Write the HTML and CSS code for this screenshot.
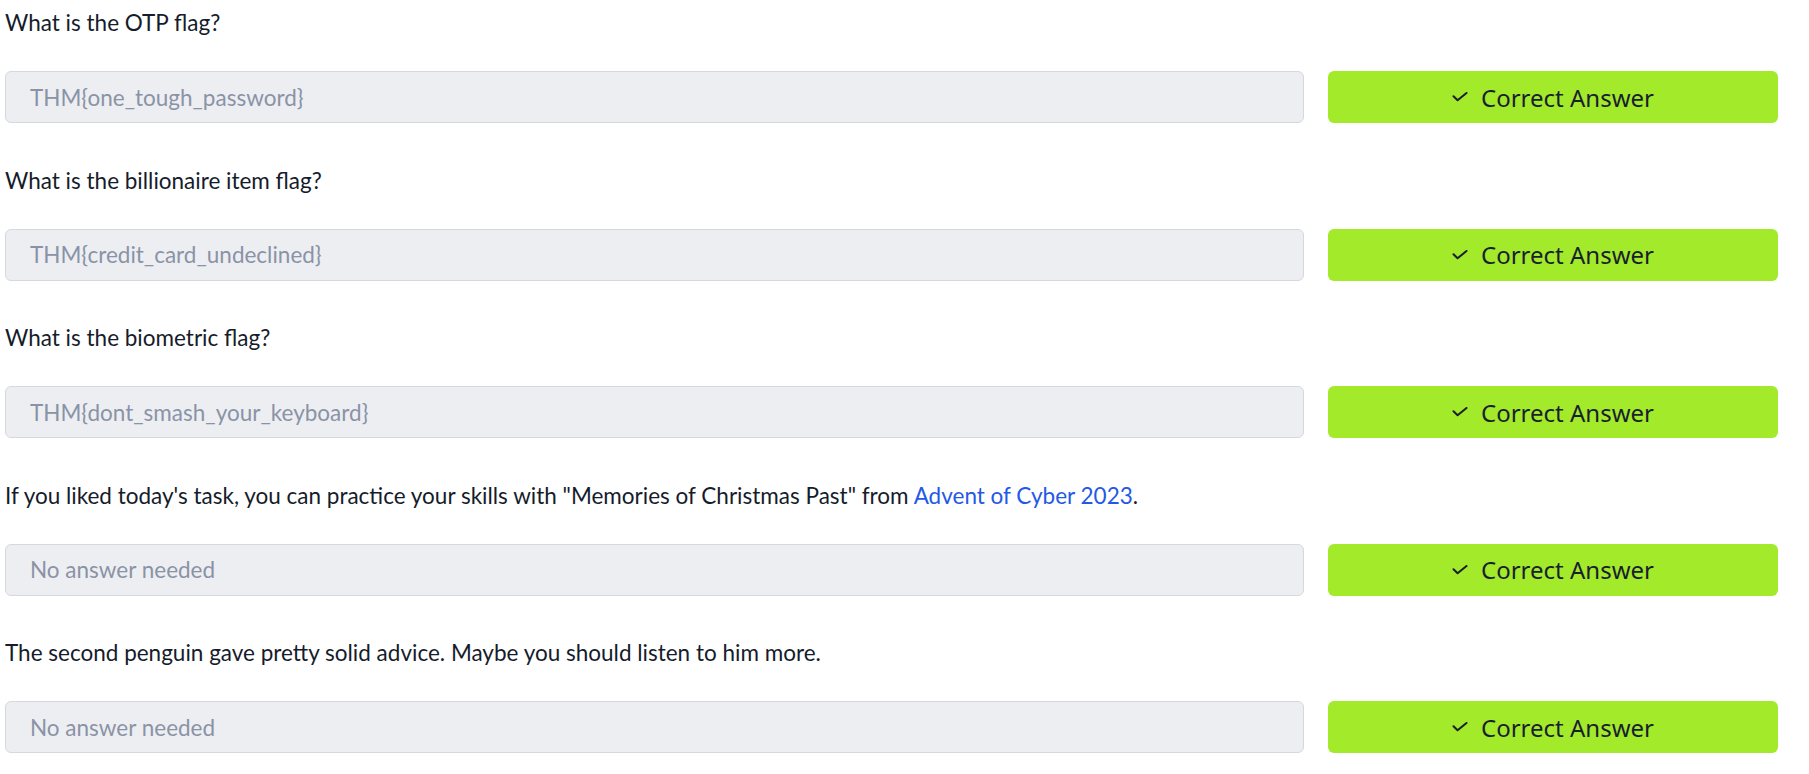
FILE: index.html
```html
<!DOCTYPE html>
<html>
<head>
<meta charset="utf-8">
<link rel="stylesheet" href="styles.css">
</head>
<body>
<main class="questions">
  <section class="question">
    <p class="question-text">What is the OTP flag?</p>
    <div class="answer-row">
      <div class="answer-input">THM{one_tough_password}</div>
      <button class="answer-btn"><svg class="check" viewBox="0 0 16 10" width="16" height="10"><path d="M1.5 4.2 L5.6 8.3 L14.5 1" fill="none" stroke="currentColor" stroke-width="2" stroke-linecap="round" stroke-linejoin="round"/></svg><span>Correct Answer</span></button>
    </div>
  </section>
  <section class="question">
    <p class="question-text">What is the billionaire item flag?</p>
    <div class="answer-row">
      <div class="answer-input">THM{credit_card_undeclined}</div>
      <button class="answer-btn"><svg class="check" viewBox="0 0 16 10" width="16" height="10"><path d="M1.5 4.2 L5.6 8.3 L14.5 1" fill="none" stroke="currentColor" stroke-width="2" stroke-linecap="round" stroke-linejoin="round"/></svg><span>Correct Answer</span></button>
    </div>
  </section>
  <section class="question">
    <p class="question-text">What is the biometric flag?</p>
    <div class="answer-row">
      <div class="answer-input">THM{dont_smash_your_keyboard}</div>
      <button class="answer-btn"><svg class="check" viewBox="0 0 16 10" width="16" height="10"><path d="M1.5 4.2 L5.6 8.3 L14.5 1" fill="none" stroke="currentColor" stroke-width="2" stroke-linecap="round" stroke-linejoin="round"/></svg><span>Correct Answer</span></button>
    </div>
  </section>
  <section class="question">
    <p class="question-text">If you liked today's task, you can practice your skills with "Memories of Christmas Past" from <a href="#" class="link">Advent of Cyber 2023</a>.</p>
    <div class="answer-row">
      <div class="answer-input">No answer needed</div>
      <button class="answer-btn"><svg class="check" viewBox="0 0 16 10" width="16" height="10"><path d="M1.5 4.2 L5.6 8.3 L14.5 1" fill="none" stroke="currentColor" stroke-width="2" stroke-linecap="round" stroke-linejoin="round"/></svg><span>Correct Answer</span></button>
    </div>
  </section>
  <section class="question">
    <p class="question-text">The second penguin gave pretty solid advice. Maybe you should listen to him more.</p>
    <div class="answer-row">
      <div class="answer-input">No answer needed</div>
      <button class="answer-btn"><svg class="check" viewBox="0 0 16 10" width="16" height="10"><path d="M1.5 4.2 L5.6 8.3 L14.5 1" fill="none" stroke="currentColor" stroke-width="2" stroke-linecap="round" stroke-linejoin="round"/></svg><span>Correct Answer</span></button>
    </div>
  </section>
</main>
</body>
</html>
```
FILE: styles.css
```css
html, body {
  margin: 0;
  padding: 0;
  background: #ffffff;
}
body {
  font-family: Lato, "Noto Sans", sans-serif;
  color: #151c2b;
}
.questions {
  display: flex;
  flex-direction: column;
  gap: 41.5px;
  padding: 7px 31px 0 5px;
}
.question {
  display: flex;
  flex-direction: column;
  gap: 32px;
}
.question-text {
  margin: 0;
  font-size: 22.5px;
  line-height: 32px;
  white-space: nowrap;
}
.link {
  color: #2458e6;
  text-decoration: none;
}
.answer-row {
  display: flex;
  gap: 24px;
  align-items: stretch;
  height: 52px;
}
.answer-input {
  flex: 1;
  box-sizing: border-box;
  border: 1px solid #d5d8df;
  border-radius: 6px;
  background: #edeef2;
  color: #8a93a6;
  font-size: 22.5px;
  padding: 0 24px;
  display: flex;
  align-items: center;
}
.answer-btn {
  width: 450px;
  border: none;
  border-radius: 6px;
  background: #a3ea2a;
  color: #1a1f2e;
  font-family: "Noto Sans", sans-serif;
  font-size: 24px;
  display: flex;
  align-items: center;
  justify-content: center;
  gap: 13px;
  padding: 0;
  cursor: pointer;
}
.check {
  display: block;
  flex: none;
}
```
